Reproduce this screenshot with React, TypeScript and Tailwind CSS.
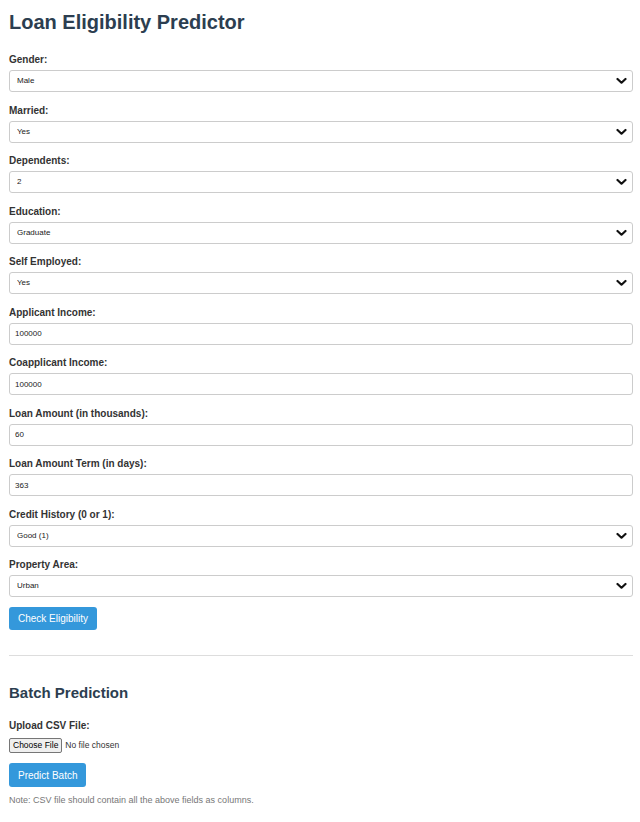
import React from "react"

type Field =
  | { label: string; kind: "select"; value: string; options: string[] }
  | { label: string; kind: "input"; value: string }

const fields: Field[] = [
  { label: "Gender:", kind: "select", value: "Male", options: ["Male", "Female"] },
  { label: "Married:", kind: "select", value: "Yes", options: ["Yes", "No"] },
  { label: "Dependents:", kind: "select", value: "2", options: ["0", "1", "2", "3+"] },
  { label: "Education:", kind: "select", value: "Graduate", options: ["Graduate", "Not Graduate"] },
  { label: "Self Employed:", kind: "select", value: "Yes", options: ["Yes", "No"] },
  { label: "Applicant Income:", kind: "input", value: "100000" },
  { label: "Coapplicant Income:", kind: "input", value: "100000" },
  { label: "Loan Amount (in thousands):", kind: "input", value: "60" },
  { label: "Loan Amount Term (in days):", kind: "input", value: "363" },
  { label: "Credit History (0 or 1):", kind: "select", value: "Good (1)", options: ["Good (1)", "Bad (0)"] },
  { label: "Property Area:", kind: "select", value: "Urban", options: ["Urban", "Semiurban", "Rural"] },
]

function Chevron() {
  return (
    <svg
      className="pointer-events-none absolute right-[6px] top-1/2 -translate-y-1/2"
      width="11"
      height="7"
      viewBox="0 0 11 7"
      fill="none"
    >
      <path d="M1.5 1.5 L5.5 5.2 L9.5 1.5" stroke="#111" strokeWidth="2.2" strokeLinecap="round" strokeLinejoin="round" />
    </svg>
  )
}

export default function App() {
  return (
    <div className="min-h-screen bg-white pl-[9px] pr-[7px] pt-[10px] text-[#333] font-['Liberation_Sans',Arial,sans-serif]">
      <h1 className="text-[20px] leading-[24px] font-bold text-[#2c3e50] mb-[19px]">Loan Eligibility Predictor</h1>

      <form onSubmit={(e) => e.preventDefault()}>
        {fields.map((f) => (
          <div key={f.label} className="mb-[11.5px]">
            <label className="block text-[10px] leading-[13px] font-bold mb-[4px]">{f.label}</label>
            {f.kind === "select" ? (
              <div className="relative">
                <select
                  defaultValue={f.value}
                  className="appearance-none block w-full h-[22px] border border-[#ccc] rounded-[3px] bg-white pl-[7px] text-[8px] text-[#222] outline-none"
                >
                  {f.options.map((o) => (
                    <option key={o}>{o}</option>
                  ))}
                </select>
                <Chevron />
              </div>
            ) : (
              <input
                defaultValue={f.value}
                className="block w-full h-[22px] border border-[#ccc] rounded-[3px] bg-white pl-[5px] text-[8px] text-[#222] outline-none"
              />
            )}
          </div>
        ))}

        <button
          type="submit"
          className="block h-[23px] px-[9px] mt-[-1.5px] rounded-[3px] bg-[#3498db] text-white text-[10px]"
        >
          Check Eligibility
        </button>
      </form>

      <hr className="mt-[25px] border-0 border-t border-[#ddd]" />

      <h2 className="mt-[27px] text-[15px] leading-[19px] font-bold text-[#2c3e50]">Batch Prediction</h2>

      <label className="block mt-[17px] text-[10px] leading-[13px] font-bold">Upload CSV File:</label>
      <input
        type="file"
        accept=".csv"
        className="block mt-[6px] text-[8.5px] leading-[11px] text-[#333] file:mr-[3px] file:border file:border-[#767676] file:bg-[#efefef] file:rounded-[2px] file:px-[3px] file:py-[1px] file:text-[8.5px] file:text-black"
      />

      <button className="block mt-[10px] h-[24px] px-[9px] rounded-[3px] bg-[#3498db] text-white text-[10px]">
        Predict Batch
      </button>

      <p className="mt-[8px] text-[9px] leading-[11px] text-[#777]">Note: CSV file should contain all the above fields as columns.</p>
    </div>
  )
}
